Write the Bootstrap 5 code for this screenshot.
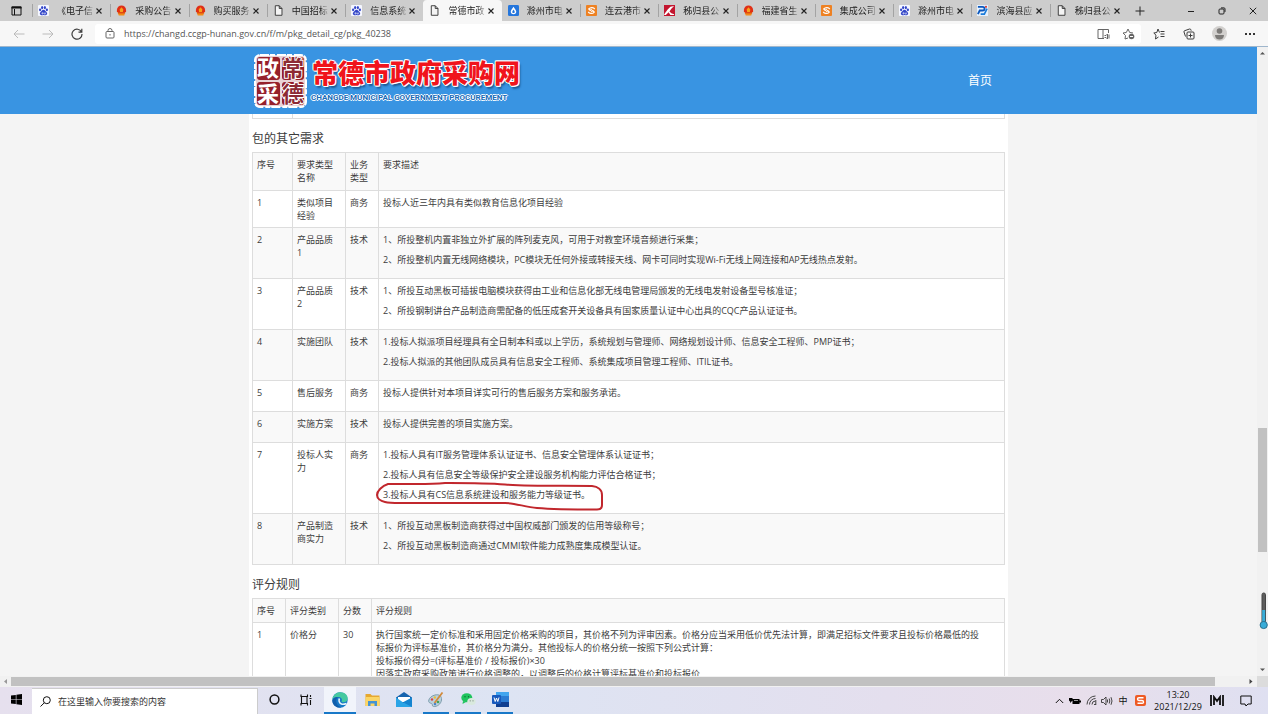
<!DOCTYPE html>
<html lang="zh-CN">
<head>
<meta charset="utf-8">
<meta name="viewport" content="width=device-width, initial-scale=1">
<title>常德市政府采购网</title>
<link rel="stylesheet" href="https://cdn.jsdelivr.net/npm/bootstrap@5.3.0/dist/css/bootstrap.min.css">
<style>
  body { font-family: "Open Sans", "Noto Sans CJK SC", sans-serif; font-size: 9px; line-height: 13px; color: #3c3c3c; background: #f4f4f4; }
  button { border: 0; background: none; padding: 0; color: inherit; display: inline-flex; align-items: center; justify-content: center; }
  a { color: inherit; text-decoration: none; }
  svg { display: block; flex: none; }
  .ln { fill: none; stroke: currentColor; }

  /* browser tabs */
  .tabstrip { height: 21px; background: #cdcdcd; color: #222; }
  .tab-menu { flex: none; width: 32px; }
  .tab-item { flex: 1 1 0; min-width: 0; padding: 0 7px 0 5px; border-left: 1px solid #a3a3a3; height: 13px; }
  .tab-item.current { height: 21px; background: #f7f7f7; border-color: #f7f7f7; border-radius: 4px 4px 0 0; }
  .tab-item.current + .tab-item { border-color: transparent; }
  .tab-name { flex: 1 1 0; margin-left: 8px; overflow: hidden; white-space: nowrap;
    -webkit-mask-image: linear-gradient(90deg, #000 75%, transparent); mask-image: linear-gradient(90deg, #000 75%, transparent); }
  .win-tools { flex: none; width: 140px; }
  .win-tools button { flex: 1 1 0; }
  .win-tools .add { flex: 0 0 24px; margin-right: 24px; }

  /* address bar */
  .toolbar { height: 26px; background: #f7f7f7; border-bottom: 1px solid #9fb6cc; }
  .nav-tools { width: 95px; }
  .nav-tools button { flex: 1 1 0; }
  .nav-tools .idle { color: #bbb; }
  .address { background: #fff; height: 20px; border-radius: 3px; padding: 0 6px 0 10px; }
  .address input { border: 0; outline: 0; padding: 0; margin-left: 9px; font-size: 9px; color: #555; background: none; min-width: 0; }
  .side-tools { width: 127px; padding: 0 3px; }
  .side-tools button { flex: 1 1 0; }

  /* site header */
  .site-header { background: #3994e2; height: 67px; }
  .site-inner { max-width: 759px; }
  .site-name { font-size: 26px; line-height: 30px; font-weight: 900; color: #f0141c;
    text-shadow: 1px 0 #fff, -1px 0 #fff, 0 1px #fff, 0 -1px #fff, 1px 1px #fff, -1px -1px #fff, 2px 3px 2px #1b5a94; }
  .site-latin { font-family: Roboto, "Liberation Sans", sans-serif; font-size: 8px; line-height: 12px; font-weight: 700; color: #1a6cb8; white-space: nowrap; margin-left: 3px;
    text-shadow: 1px 0 #fff, -1px 0 #fff, 0 1px #fff, 0 -1px #fff; }
  .home-link { font-size: 12px; color: #fff; margin-right: 16px; }
  .seal-text { font: 700 22px "Liberation Sans", "Noto Sans CJK SC", sans-serif; }

  /* page content */
  .view { flex: 1 1 0; min-height: 0; }
  .sheet { background: #fff; padding: 0 3px; flex: 1 1 0; min-height: 0; overflow: hidden; }
  .section-title { font-size: 12px; line-height: 16px; font-weight: 400; margin: 0; padding: 12px 0 5px; }
  .req { width: 100%; table-layout: fixed; border-collapse: collapse; }
  .req td, .req th { border: 1px solid #ddd; padding: 5px 4px; vertical-align: top; font-weight: 400; text-align: left; }
  .req thead tr { background: #f9f9f9; }
  .req tbody tr:nth-child(even) { background: #f9f9f9; }
  .req.main-req th { padding-bottom: 6px; }
  .req p { margin: 0 0 7px; }
  .req.tail { height: 5px; }
  .req.tail td { padding: 0; border-top: 0; }
  .c-a { width: 40px; } .c-b { width: 53px; } .c-c { width: 33px; } .c-n { width: 33px; }
  .ring { position: absolute; left: -8px; top: -6px; }

  /* scroll bars */
  .vbar { width: 11px; background: #f1f1f1; padding: 4px 1px; }
  .vbar .thumb { background: #c1c1c1; flex: 0 0 20%; }
  .vbar .above { flex: 0 0 60%; }
  .thermo { position: absolute; right: 0; bottom: 46px; }
  .hbar { height: 11px; background: #f1f1f1; }
  .hbar .thumb { background: #c1c1c1; height: 9px; flex: 1 1 0; }
  .hbar .rest { width: 42px; padding-right: 4px; }
  .hbar .corner { width: 11px; background: #dcdcdc; height: 11px; }

  /* taskbar */
  .taskbar { height: 27px; color: #111; background: linear-gradient(90deg, #e6e0ee, #dde4f3 40%, #e4dfee 70%, #e8deeb 85%, #dfe0f1); }
  .taskbar .app { width: 32px; height: 27px; border-bottom: 2px solid transparent; }
  .taskbar .app.open { background: linear-gradient(#1878c8, #1878c8) center bottom / 26px 2px no-repeat; background-origin: border-box; background-clip: border-box; }
  .taskbar .app.front { background: #f1f4fb; border-bottom-color: #1878c8; margin-left: 2px; }
  .search { width: 226px; background: #fff; border: 1px solid #ccc; border-width: 1px 1px 0 0; padding-left: 8px; height: 26px; }
  .search input { border: 0; outline: 0; padding: 0; margin-left: 7px; font-size: 9px; min-width: 0; }
  .search input::placeholder { color: #333; opacity: 1; }
  .clock { width: 56px; font-size: 9px; line-height: 12px; }
  .w-16 { width: 16px; }
</style>
<script src="https://cdn.jsdelivr.net/npm/bootstrap@5.3.0/dist/js/bootstrap.bundle.min.js"></script>
</head>
<body class="vh-100 d-flex flex-column overflow-hidden">

<svg width="0" height="0" class="position-absolute" aria-hidden="true">
  <symbol id="i-x" viewBox="0 0 8 8"><path d="M1.5 1.5l5 5M6.500 1.500l-5 5" fill="none" stroke="#222" stroke-width="1.1"/></symbol>
  <symbol id="i-paw" viewBox="0 0 12 12"><rect width="12" height="12" rx="1" fill="#f4f6ff"/><g fill="#3346c8"><ellipse cx="2.300" cy="5.300" rx="1.200" ry="1.600"/><ellipse cx="4.500" cy="2.800" rx="1.200" ry="1.700"/><ellipse cx="7.500" cy="2.800" rx="1.200" ry="1.700"/><ellipse cx="9.700" cy="5.300" rx="1.200" ry="1.600"/><path d="M6 5.200c1.500 0 2 1.500 3.200 2.500 1.500 1.400.8 3.500-1 3.400-.9 0-1.300-.3-2.200-.3s-1.300.3-2.200.3c-1.800.1-2.500-2-1-3.400C4 6.700 4.500 5.200 6 5.200z"/></g><path d="M4.300 8.500h1.200v1.300H4.300zM6.700 8.200v1.700h1.300V8.200" fill="none" stroke="#fff" stroke-width=".6"/></symbol>
  <symbol id="i-emb" viewBox="0 0 12 12"><path d="M1 5.500a5 5 0 0 1 10 0v2H1z" fill="#e02f16"/><path d="M6 2.500L8 5l-.5 2.500h-3L4 5z" fill="#f7a21d"/><path d="M1.800 7.500h8.400l-1.200 4H3z" fill="#f28a17"/><path d="M2 8.500h8" stroke="#d5260f" stroke-width="1"/></symbol>
  <symbol id="i-page" viewBox="0 0 12 12"><path d="M2.500.8h4.300l3 3v7.400H2.500zM6.800.8v3h3" fill="#f4f4f4" stroke="#333" stroke-linejoin="round"/></symbol>
  <symbol id="i-drop" viewBox="0 0 12 12"><rect width="12" height="12" rx="1.500" fill="#2576dc"/><path d="M6 1.800c1 2 3 3.600 3 5.400a3 3 0 0 1-6 0C3 5.400 5 3.800 6 1.800z" fill="#fff"/><path d="M6 5c.8 1.200 1.300 1.700 1.300 2.500a1.300 1.300 0 0 1-2.600 0C4.700 6.700 5.400 6.200 6 5z" fill="#2576dc"/></symbol>
  <symbol id="i-org" viewBox="0 0 12 12"><rect width="12" height="12" rx="1" fill="#ee8122"/><path d="M9.500 4.500C8.500 2.500 5 2 3 4.300L4.600 6l1.600-1.300M2.500 7.500C3.500 9.500 7 10 9 7.700L7.400 6 5.800 7.300" fill="none" stroke="#fff" stroke-width="1.300"/></symbol>
  <symbol id="i-red" viewBox="0 0 12 12"><rect width="12" height="12" fill="#c3162f"/><path d="M1 9l3-4 3-3 4-1-3 3-2 3 2 2 3 1v1H7L5 8l-3 3H0z" fill="#fff"/></symbol>
  <symbol id="i-blue" viewBox="0 0 12 12"><rect width="12" height="12" fill="#e7f1fc"/><path d="M1 2h5c3 0 3 4 0 4H3L1 10" fill="none" stroke="#0b57bd" stroke-width="2"/><path d="M11 4L8 10H4" fill="none" stroke="#1b7cda" stroke-width="1.800"/><circle cx="9.800" cy="2" r="1.200" fill="#dc3d36"/></symbol>
</svg>

<div class="tabstrip d-flex align-items-center">
  <button class="tab-menu" aria-label="标签页操作"><svg width="11" height="10" viewBox="0 0 11 10"><path d="M1 1h9v8H1zM3.500 3v6" fill="none" stroke="#111"/><path d="M.5.500h10v2H.5z" fill="#111"/></svg></button>
  <nav class="d-flex flex-fill align-items-center" aria-label="标签页">
    <div class="tab-item d-flex align-items-center"><svg width="11" height="11"><use href="#i-paw"/></svg><a href="#" class="tab-name">《电子信</a><button aria-label="关闭"><svg width="8" height="8"><use href="#i-x"/></svg></button></div>
    <div class="tab-item d-flex align-items-center"><svg width="11" height="11"><use href="#i-emb"/></svg><a href="#" class="tab-name">采购公告</a><button aria-label="关闭"><svg width="8" height="8"><use href="#i-x"/></svg></button></div>
    <div class="tab-item d-flex align-items-center"><svg width="11" height="11"><use href="#i-emb"/></svg><a href="#" class="tab-name">购买服务</a><button aria-label="关闭"><svg width="8" height="8"><use href="#i-x"/></svg></button></div>
    <div class="tab-item d-flex align-items-center"><svg width="11" height="11"><use href="#i-page"/></svg><a href="#" class="tab-name">中国招标</a><button aria-label="关闭"><svg width="8" height="8"><use href="#i-x"/></svg></button></div>
    <div class="tab-item d-flex align-items-center"><svg width="11" height="11"><use href="#i-paw"/></svg><a href="#" class="tab-name">信息系统</a><button aria-label="关闭"><svg width="8" height="8"><use href="#i-x"/></svg></button></div>
    <div class="tab-item current d-flex align-items-center"><svg width="11" height="11"><use href="#i-page"/></svg><a href="#" class="tab-name">常德市政</a><button aria-label="关闭"><svg width="8" height="8"><use href="#i-x"/></svg></button></div>
    <div class="tab-item d-flex align-items-center"><svg width="11" height="11"><use href="#i-drop"/></svg><a href="#" class="tab-name">滁州市电</a><button aria-label="关闭"><svg width="8" height="8"><use href="#i-x"/></svg></button></div>
    <div class="tab-item d-flex align-items-center"><svg width="11" height="11"><use href="#i-org"/></svg><a href="#" class="tab-name">连云港市</a><button aria-label="关闭"><svg width="8" height="8"><use href="#i-x"/></svg></button></div>
    <div class="tab-item d-flex align-items-center"><svg width="11" height="11"><use href="#i-red"/></svg><a href="#" class="tab-name">秭归县公</a><button aria-label="关闭"><svg width="8" height="8"><use href="#i-x"/></svg></button></div>
    <div class="tab-item d-flex align-items-center"><svg width="11" height="11"><use href="#i-emb"/></svg><a href="#" class="tab-name">福建省生</a><button aria-label="关闭"><svg width="8" height="8"><use href="#i-x"/></svg></button></div>
    <div class="tab-item d-flex align-items-center"><svg width="11" height="11"><use href="#i-org"/></svg><a href="#" class="tab-name">集成公司</a><button aria-label="关闭"><svg width="8" height="8"><use href="#i-x"/></svg></button></div>
    <div class="tab-item d-flex align-items-center"><svg width="11" height="11"><use href="#i-paw"/></svg><a href="#" class="tab-name">滁州市电</a><button aria-label="关闭"><svg width="8" height="8"><use href="#i-x"/></svg></button></div>
    <div class="tab-item d-flex align-items-center"><svg width="11" height="11"><use href="#i-blue"/></svg><a href="#" class="tab-name">滨海县应</a><button aria-label="关闭"><svg width="8" height="8"><use href="#i-x"/></svg></button></div>
    <div class="tab-item d-flex align-items-center"><svg width="11" height="11"><use href="#i-page"/></svg><a href="#" class="tab-name">秭归县公</a><button aria-label="关闭"><svg width="8" height="8"><use href="#i-x"/></svg></button></div>
  </nav>
  <div class="win-tools d-flex align-items-center">
    <button class="add" aria-label="新建标签页"><svg class="ln" width="10" height="10" viewBox="0 0 10 10"><path d="M5 .5v9M.5 5h9"/></svg></button>
    <button aria-label="最小化"><svg class="ln" width="8" height="8" viewBox="0 0 8 8"><path d="M1 4.500h6"/></svg></button>
    <button aria-label="还原"><svg class="ln" width="8" height="8" viewBox="0 0 8 8"><rect x="1" y="2" width="5" height="5" rx="1"/><path d="M3 .9h3a1 1 0 0 1 1 1v3"/></svg></button>
    <button aria-label="关闭窗口"><svg class="ln" width="8" height="8" viewBox="0 0 8 8"><path d="M.8.800l6.400 6.400M7.200.800L.8 7.200"/></svg></button>
  </div>
</div>

<div class="toolbar d-flex align-items-center">
  <div class="nav-tools d-flex px-1">
    <button class="idle" aria-label="后退"><svg class="ln" width="12" height="10" viewBox="0 0 12 10"><path d="M11.500 5H1M5 1L1 5l4 4"/></svg></button>
    <button class="idle" aria-label="前进"><svg class="ln" width="12" height="10" viewBox="0 0 12 10"><path d="M.5 5H11M7 1l4 4-4 4"/></svg></button>
    <button aria-label="刷新"><svg class="ln" width="12" height="12" viewBox="0 0 12 12"><path d="M10.500 4A5 5 0 1 0 11 6M10.800 .8v3.400H7.500" stroke-width="1.200"/></svg></button>
  </div>
  <div class="address d-flex flex-fill align-items-center">
    <svg class="ln" width="10" height="11" viewBox="0 0 10 11"><rect x="1" y="3.500" width="8" height="6.500" rx="1" stroke="#666"/><path d="M3 3.500V2.500a2 2 0 0 1 4 0v1M5 6v1.500" stroke="#666"/></svg>
    <input class="flex-fill" type="text" aria-label="地址" value="https://changd.ccgp-hunan.gov.cn/f/m/pkg_detail_cg/pkg_40238">
    <button class="me-2" aria-label="朗读"><svg class="ln" width="13" height="12" viewBox="0 0 13 12"><path d="M7 10.500H1v-9h10.500V5M6 1.500v9M7.500 7.500H9L10.500 6v5L9 9.500H7.500M12 6.500v4" stroke="#666"/></svg></button>
    <button class="ms-1" aria-label="收藏此页"><svg class="ln" width="13" height="12" viewBox="0 0 13 12"><path d="M6 10L3 11l.5-3.500L1 5l3.300-.5L6 1l1.700 3.500L11 5" stroke="#666"/><circle cx="9.500" cy="8.500" r="2.800" fill="#666" stroke="none"/><path d="M8 8.500h3" stroke="#fff"/></svg></button>
  </div>
  <div class="side-tools d-flex align-items-center">
    <button aria-label="收藏夹"><svg class="ln" width="12" height="12" viewBox="0 0 12 12"><path d="M6.500 4.500L5 1 3.800 4.500.8 5l2.200 2.200L2.500 11 5.500 9M7.500 3.500h4M7.500 6h4M7.500 8.500h4"/></svg></button>
    <button aria-label="集锦"><svg class="ln" width="12" height="12" viewBox="0 0 12 12"><rect x="4" y="4" width="7" height="7" rx="1"/><path d="M7.500 5.500v4M5.500 7.500h4M2.500 8.500L1 4a1 1 0 0 1 .7-1.300L6.500 1a1 1 0 0 1 1.300.7l.4 1"/></svg></button>
    <button aria-label="个人资料"><svg width="15" height="15" viewBox="0 0 15 15"><circle cx="7.500" cy="7.500" r="7.500" fill="#d2d0ce"/><circle cx="7.500" cy="5" r="2.800" fill="#7c7a78"/><path d="M3 9h9c0 3-2 4.500-4.500 4.500S3 12 3 9z" fill="#7c7a78"/></svg></button>
    <button aria-label="设置及其他"><svg width="10" height="4" viewBox="0 0 10 4"><path d="M0 1h2v2H0zM4 1h2v2H4zM8 1h2v2H8z" fill="#333"/></svg></button>
  </div>
</div>

<div class="view d-flex position-relative">
  <div class="d-flex flex-column flex-fill">
    <header class="site-header">
      <div class="site-inner mx-auto h-100 d-flex align-items-center">
        <svg class="ms-1" width="55" height="56" viewBox="0 0 55 56" role="img" aria-label="常德政采">
          <rect x="2" y="2" width="51" height="52" rx="5" fill="#e9d3d6" stroke="#fff" stroke-width="2" stroke-dasharray="9 1 5 2"/>
          <rect x="4" y="4" width="23" height="23" rx="3" fill="#96202b"/>
          <rect x="4" y="29" width="23" height="23" rx="3" fill="#96202b"/>
          <rect x="29" y="4" width="22" height="23" rx="3" fill="#96202b"/>
          <rect x="29" y="29" width="22" height="23" rx="3" fill="#96202b"/>
          <g class="seal-text" fill="#fff" text-anchor="middle"><text x="15" y="23">政</text><text x="15" y="49">采</text></g>
          <g class="seal-text" fill="#8d2a34" stroke="#fff" stroke-width="2" paint-order="stroke" text-anchor="middle"><text x="40" y="23">常</text><text x="40" y="49">德</text></g>
        </svg>
        <div>
          <h1 class="site-name mb-0 ms-1">常德市政府采购网</h1>
          <div class="site-latin mt-1">CHANGDE MUNICIPAL GOVERNMENT PROCUREMENT</div>
        </div>
        <a href="#" class="home-link ms-auto">首页</a>
      </div>
    </header>
    <main class="sheet site-inner mx-auto w-100">
      <table class="req tail" aria-hidden="true"><colgroup><col class="c-a"><col></colgroup><tbody><tr><td></td><td></td></tr></tbody></table>
      <h2 class="section-title">包的其它需求</h2>
      <table class="req main-req">
        <colgroup><col class="c-a"><col class="c-b"><col class="c-c"><col></colgroup>
        <thead><tr><th>序号</th><th>要求类型名称</th><th>业务类型</th><th>要求描述</th></tr></thead>
        <tbody>
          <tr><td>1</td><td>类似项目经验</td><td>商务</td><td>投标人近三年内具有类似教育信息化项目经验</td></tr>
          <tr><td>2</td><td>产品品质<br>1</td><td>技术</td><td><p>1、所投整机内置非独立外扩展的阵列麦克风，可用于对教室环境音频进行采集；</p><p>2、所投整机内置无线网络模块，PC模块无任何外接或转接天线、网卡可同时实现Wi-Fi无线上网连接和AP无线热点发射。</p></td></tr>
          <tr><td>3</td><td>产品品质<br>2</td><td>技术</td><td><p>1、所投互动黑板可插拔电脑模块获得由工业和信息化部无线电管理局颁发的无线电发射设备型号核准证；</p><p>2、所投钢制讲台产品制造商需配备的低压成套开关设备具有国家质量认证中心出具的CQC产品认证证书。</p></td></tr>
          <tr><td>4</td><td>实施团队</td><td>技术</td><td><p>1.投标人拟派项目经理具有全日制本科或以上学历，系统规划与管理师、网络规划设计师、信息安全工程师、PMP证书；</p><p>2.投标人拟派的其他团队成员具有信息安全工程师、系统集成项目管理工程师、ITIL证书。</p></td></tr>
          <tr><td>5</td><td>售后服务</td><td>商务</td><td><p>投标人提供针对本项目详实可行的售后服务方案和服务承诺。</p></td></tr>
          <tr><td>6</td><td>实施方案</td><td>技术</td><td><p>投标人提供完善的项目实施方案。</p></td></tr>
          <tr><td>7</td><td>投标人实<br>力</td><td>商务</td><td><p>1.投标人具有IT服务管理体系认证证书、信息安全管理体系认证证书；</p><p>2.投标人具有信息安全等级保护安全建设服务机构能力评估合格证书；</p>
            <p class="position-relative">3.投标人具有CS信息系统建设和服务能力等级证书。
              <svg class="ring" width="230" height="30" viewBox="0 0 230 30" aria-hidden="true"><path d="M13 2C7 4 2 9 2 13c0 3 3 6 8 7 4 1 8 1 15 1h105c10 0 20 4 32 5s40 1.500 60 1.500c4 0 5-2 5-4.500V13c0-5-4-8.500-10-9-30-.500-60 .500-87-1.500C110 .9 90 1 70 1 50 3 30 1.500 13 2z" fill="none" stroke="#c1272d" stroke-width="2"/></svg></p></td></tr>
          <tr><td>8</td><td>产品制造<br>商实力</td><td>技术</td><td><p>1、所投互动黑板制造商获得过中国权威部门颁发的信用等级称号；</p><p>2、所投互动黑板制造商通过CMMI软件能力成熟度集成模型认证。</p></td></tr>
        </tbody>
      </table>
      <h2 class="section-title">评分规则</h2>
      <table class="req">
        <colgroup><col class="c-n"><col class="c-b"><col class="c-n"><col></colgroup>
        <thead><tr><th>序号</th><th>评分类别</th><th>分数</th><th>评分规则</th></tr></thead>
        <tbody>
          <tr><td>1</td><td>价格分</td><td>30</td><td>执行国家统一定价标准和采用固定价格采购的项目，其价格不列为评审因素。价格分应当采用低价优先法计算，即满足招标文件要求且投标价格最低的投<br>标报价为评标基准价，其价格分为满分。其他投标人的价格分统一按照下列公式计算：<br>投标报价得分=(评标基准价 / 投标报价)×30<br>因落实政府采购政策进行价格调整的，以调整后的价格计算评标基准价和投标报价</td></tr>
        </tbody>
      </table>
    </main>
  </div>
  <div class="vbar d-flex flex-column" aria-hidden="true">
    <svg width="9" height="4" viewBox="0 0 9 4"><path d="M2 3.500L4.500 1 7 3.500z" fill="#555"/></svg>
    <div class="above"></div><div class="thumb"></div>
    <svg class="mt-auto" width="9" height="4" viewBox="0 0 9 4"><path d="M2 .5L4.500 3 7 .5z" fill="#555"/></svg>
  </div>
  <svg class="thermo" width="9" height="38" viewBox="0 0 9 38" aria-hidden="true"><rect x="3" y="1" width="3.500" height="30" rx="1.700" fill="#5d5d5d" stroke="#444"/><path d="M4.700 18v14" stroke="#38acd8" stroke-width="3"/><circle cx="4.700" cy="33" r="3.600" fill="#38acd8" stroke="#2b6f8c"/></svg>
</div>

<div class="hbar d-flex align-items-center" aria-hidden="true">
  <svg width="11" height="7" viewBox="0 0 11 7"><path d="M7 1L4 3.500 7 6z" fill="#999"/></svg>
  <div class="thumb"></div>
  <div class="rest d-flex justify-content-end"><svg width="4" height="7" viewBox="0 0 4 7"><path d="M.5 1l3 2.500-3 2.500z" fill="#444"/></svg></div>
  <div class="corner"></div>
</div>

<footer class="taskbar d-flex align-items-center">
  <button class="app" aria-label="开始"><svg width="11" height="11" viewBox="0 0 11 11"><path d="M0 1.600L4.800.9v4.300H0zM5.400.800L11 0v5.200H5.400zM0 5.800h4.800v4.300L0 9.400zM5.400 5.800H11V11l-5.600-.8z"/></svg></button>
  <div class="search d-flex align-items-center">
    <svg class="ln" width="11" height="11" viewBox="0 0 11 11"><circle cx="6.800" cy="4.200" r="3.500"/><path d="M4.300 6.800L.5 10.500"/></svg>
    <input class="flex-fill" type="text" aria-label="搜索" placeholder="在这里输入你要搜索的内容">
  </div>
  <button class="app" aria-label="Cortana"><svg class="ln" width="11" height="11" viewBox="0 0 11 11"><circle cx="5.500" cy="5.500" r="4.400" stroke-width="1.500"/></svg></button>
  <button class="app" aria-label="任务视图"><svg class="ln" width="12" height="12" viewBox="0 0 12 12"><path d="M1 .5v2h6.500v-2M1 11.500v-2h6.500v2M1.500 2.500v7M7 2.500v7M10.500 1v2M10.500 6v5M9.500 4.500h2" stroke-width="1.100"/></svg></button>
  <button class="app front" aria-label="Edge"><svg width="16" height="16" viewBox="0 0 16 16"><circle cx="8" cy="8" r="7.700" fill="#1679c8"/><path d="M.4 7.500C1 3 4.500.3 8.500.3c4.500 0 7.200 3 7.200 6 0 2.500-2 4-4 4-1.500 0-2.500-.500-2-1.300 1-1.500-.5-4-3.200-4C3.500 5 1.200 6 .4 7.500z" fill="#45c9a0"/><path d="M.3 8.500C1 5.500 4 4.500 6.500 5 5 5.700 4 7.500 4.300 9.700c.4 3 2.700 5 5.200 5.600C4.500 16.500.3 13 .3 8.500z" fill="#115fac"/><path d="M7.500 6.500c-1 1.700-.5 5 2.500 5.700 1.500.3 3-.1 4.500-.7" fill="none" stroke="#e7f3fb" stroke-width="1.600"/></svg></button>
  <button class="app" aria-label="文件资源管理器"><svg width="15" height="14" viewBox="0 0 15 14"><path d="M.5 1h5l1.500 1.500h7.500V13H.5z" fill="#e6a830"/><path d="M.5 4h14v9H.5z" fill="#fbd565"/><path d="M3 13V8h9v5H9.500v-2.500h-4V13z" fill="#4593d3"/></svg></button>
  <button class="app" aria-label="邮件"><svg width="16" height="15" viewBox="0 0 16 15"><path d="M0 5.500L8 0l8 5.500V15H0z" fill="#1664ae"/><path d="M2 5h12v5H2z" fill="#fff"/><path d="M0 5.500L8 11l8-5.500V15H0z" fill="#2aa4e6"/><path d="M16 5.500V15L7 10.300z" fill="#1584cf"/></svg></button>
  <button class="app open" aria-label="画图"><svg width="16" height="16" viewBox="0 0 16 16"><path d="M7 3c4-1 7 1 6.500 5S9 15 5.500 14.500c-2-.3-.5-2.500-2-3S0 10.500.8 8 4 3.700 7 3z" fill="#b9d0dd" stroke="#7f9dad"/><circle cx="4" cy="7.500" r="1.200" fill="#d44"/><circle cx="6.800" cy="5.500" r="1.200" fill="#eebf35"/><circle cx="10" cy="10" r="1.300" fill="#42a25b"/><circle cx="7" cy="12" r="1.200" fill="#447fd0"/><path d="M14.500.5L6.500 11" stroke="#d18a3c" stroke-width="1.800"/></svg></button>
  <button class="app open" aria-label="微信"><svg width="15" height="13" viewBox="0 0 15 13"><ellipse cx="5.800" cy="4.700" rx="5.500" ry="4.500" fill="#1fc45e"/><path d="M2 8L1.500 11 5 9z" fill="#1fc45e"/><ellipse cx="10.500" cy="8.500" rx="4.200" ry="3.500" fill="#d9e9de"/><circle cx="4" cy="3.700" r=".7" fill="#0c6c31"/><circle cx="7.500" cy="3.700" r=".7" fill="#0c6c31"/><circle cx="9.200" cy="7.800" r=".6" fill="#728277"/><circle cx="12" cy="7.800" r=".6" fill="#728277"/></svg></button>
  <button class="app open" aria-label="Word"><svg width="17" height="15" viewBox="0 0 17 15"><rect x="4" width="13" height="15" rx="1" fill="#2b7cd3"/><path d="M4 0h13v4H4z" fill="#41a5ee"/><path d="M4 10h13v5H4z" fill="#103f91"/><rect y="3" width="9" height="9" rx="1" fill="#185abd"/><path d="M2 5.500l1.200 4L4.500 6l1.300 3.500L7 5.500" fill="none" stroke="#fff"/></svg></button>
  <div class="d-flex align-items-center ms-auto">
    <button class="w-16" aria-label="显示隐藏的图标"><svg class="ln" width="9" height="6" viewBox="0 0 9 6"><path d="M.8 5L4.500 1.300 8.200 5"/></svg></button>
    <button class="w-16" aria-label="电池"><svg width="12" height="8" viewBox="0 0 12 8"><path d="M3.500 2h7v5h-7zM10.500 3.500h1.500v2h-1.500zM0 1h3.500v2.500L2 5v1H1.500V5L0 3.500z"/><path d="M5 3.500h4" stroke="#ddd" stroke-width=".7"/></svg></button>
    <button class="w-16" aria-label="网络"><svg class="ln" width="11" height="11" viewBox="0 0 11 11"><path d="M1 9.500A8.500 8.500 0 0 1 9.500 1M3.500 9.500a6 6 0 0 1 6-6M6 9.500A3.500 3.500 0 0 1 9.500 6M8 9.500h2M9.800 5v5" stroke="#444"/></svg></button>
    <button class="w-16" aria-label="音量"><svg class="ln" width="12" height="10" viewBox="0 0 12 10"><path d="M.5 3.500h2L5 1v8L2.500 6.500h-2zM6.500 3.500v3M8.200 2.500q1.200 2.500 0 5M10 1.200q2 3.800 0 7.600" stroke="#333" stroke-width=".9"/></svg></button>
    <button class="w-16" aria-label="输入法">中</button>
    <button class="mx-1" aria-label="搜狗输入法"><svg width="11" height="11" viewBox="0 0 11 11"><rect width="11" height="11" rx="2" fill="#ee5a24"/><path d="M8.500 2.700H4Q2.500 2.700 2.500 4T4 5.500h3Q8.500 5.500 8.500 7T7 8.300H2.500" fill="none" stroke="#fff" stroke-width="1.400"/></svg></button>
    <div class="clock text-center">13:20<br>2021/12/29</div>
    <button class="ms-1 me-3" aria-label="输入工具"><svg width="14" height="11" viewBox="0 0 14 11"><path d="M1 0v11M13 0v11M4 10V2l3 4 3-4v8" fill="none" stroke="#111" stroke-width="1.800"/></svg></button>
    <button class="me-3" aria-label="通知"><svg class="ln" width="12" height="12" viewBox="0 0 12 12"><path d="M.8 1h10.400v8H8l-2 2-1-2H.8z"/></svg></button>
  </div>
</footer>
</body>
</html>
